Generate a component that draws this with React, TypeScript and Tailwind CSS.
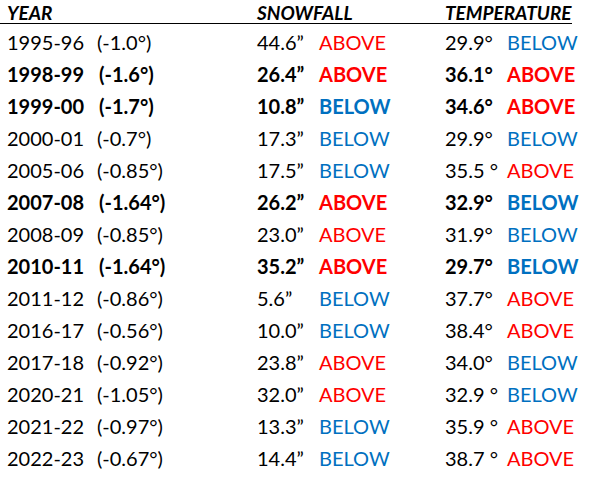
const rows = [
  { year: '1995-96', dev: '(-1.0°)', snow: '44.6”', snowTag: 'ABOVE', temp: '29.9°', tempTag: 'BELOW', bold: false },
  { year: '1998-99', dev: '(-1.6°)', snow: '26.4”', snowTag: 'ABOVE', temp: '36.1°', tempTag: 'ABOVE', bold: true },
  { year: '1999-00', dev: '(-1.7°)', snow: '10.8”', snowTag: 'BELOW', temp: '34.6°', tempTag: 'ABOVE', bold: true },
  { year: '2000-01', dev: '(-0.7°)', snow: '17.3”', snowTag: 'BELOW', temp: '29.9°', tempTag: 'BELOW', bold: false },
  { year: '2005-06', dev: '(-0.85°)', snow: '17.5”', snowTag: 'BELOW', temp: '35.5 °', tempTag: 'ABOVE', bold: false },
  { year: '2007-08', dev: '(-1.64°)', snow: '26.2”', snowTag: 'ABOVE', temp: '32.9°', tempTag: 'BELOW', bold: true },
  { year: '2008-09', dev: '(-0.85°)', snow: '23.0”', snowTag: 'ABOVE', temp: '31.9°', tempTag: 'BELOW', bold: false },
  { year: '2010-11', dev: '(-1.64°)', snow: '35.2”', snowTag: 'ABOVE', temp: '29.7°', tempTag: 'BELOW', bold: true },
  { year: '2011-12', dev: '(-0.86°)', snow: '5.6”', snowTag: 'BELOW', temp: '37.7°', tempTag: 'ABOVE', bold: false },
  { year: '2016-17', dev: '(-0.56°)', snow: '10.0”', snowTag: 'BELOW', temp: '38.4°', tempTag: 'ABOVE', bold: false },
  { year: '2017-18', dev: '(-0.92°)', snow: '23.8”', snowTag: 'ABOVE', temp: '34.0°', tempTag: 'BELOW', bold: false },
  { year: '2020-21', dev: '(-1.05°)', snow: '32.0”', snowTag: 'ABOVE', temp: '32.9 °', tempTag: 'BELOW', bold: false },
  { year: '2021-22', dev: '(-0.97°)', snow: '13.3”', snowTag: 'BELOW', temp: '35.9 °', tempTag: 'ABOVE', bold: false },
  { year: '2022-23', dev: '(-0.67°)', snow: '14.4”', snowTag: 'BELOW', temp: '38.7 °', tempTag: 'ABOVE', bold: false },
];

function Tag({ value }: { value: string }) {
  return <span className={value === 'ABOVE' ? 'text-[#ff0000]' : 'text-[#0070c0]'}>{value}</span>;
}

export default function App() {
  return (
    <div className="w-[590px] h-[486px] bg-white text-black font-['Lato',sans-serif] overflow-hidden">
      <div className="w-[572px]">
        {/* header */}
        <div className="h-[24px] pt-[3px] border-b border-black grid grid-cols-[257px_188px_1fr] text-[19px] leading-[20px] font-bold italic">
          <span className="pl-[7px]">YEAR</span>
          <span>SNOWFALL</span>
          <span>TEMPERATURE</span>
        </div>

        {/* rows */}
        <div className="pt-[2px]">
          {rows.map((r) => (
            <div key={r.year} className={`grid grid-cols-[257px_62px_126px_62px_1fr] h-[32px] text-[20px] leading-[32px] whitespace-pre ${r.bold ? 'font-bold' : ''}`}>
              <div className="pl-[7px] flex">
                <span className={r.bold ? 'w-[92px]' : 'w-[90px]'}>{r.year}</span>
                <span>{r.dev}</span>
              </div>
              <span>{r.snow}</span>
              <Tag value={r.snowTag} />
              <span>{r.temp}</span>
              <Tag value={r.tempTag} />
            </div>
          ))}
        </div>
      </div>
    </div>
  );
}
